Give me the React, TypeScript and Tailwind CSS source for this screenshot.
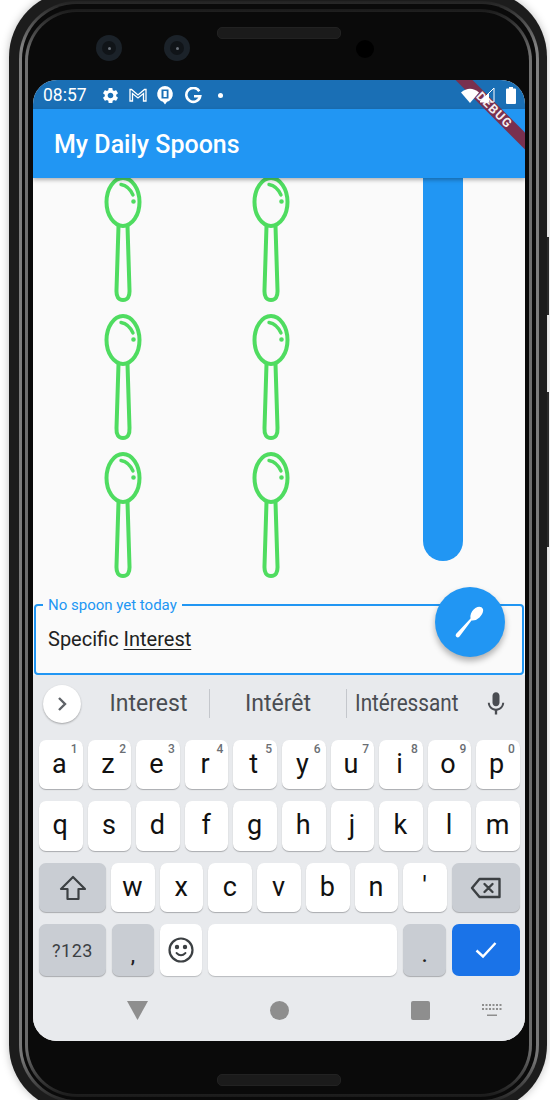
import React from "react";

const GEAR = "M19.14 12.94c.04-.3.06-.61.06-.94 0-.32-.02-.64-.07-.94l2.03-1.58c.18-.14.23-.41.12-.61l-1.92-3.32c-.12-.22-.37-.29-.59-.22l-2.39.96c-.5-.38-1.03-.7-1.62-.94l-.36-2.54c-.04-.24-.24-.41-.48-.41h-3.84c-.24 0-.43.17-.47.41l-.36 2.54c-.59.24-1.13.57-1.62.94l-2.39-.96c-.22-.08-.47 0-.59.22L2.74 8.87c-.12.21-.08.47.12.61l2.03 1.58c-.05.3-.09.63-.09.94s.02.64.07.94l-2.03 1.58c-.18.14-.23.41-.12.61l1.92 3.32c.12.22.37.29.59.22l2.39-.96c.5.38 1.03.7 1.62.94l.36 2.54c.05.24.24.41.48.41h3.84c.24 0 .44-.17.47-.41l.36-2.54c.59-.24 1.13-.56 1.62-.94l2.39.96c.22.08.47 0 .59-.22l1.92-3.32c.12-.22.07-.47-.12-.61l-2.01-1.58zM12 15.6c-1.98 0-3.6-1.62-3.6-3.6s1.62-3.6 3.6-3.6 3.6 1.62 3.6 3.6-1.62 3.6-3.6 3.6z";
const MIC = "M12 14c1.66 0 2.99-1.34 2.99-3L15 5c0-1.66-1.34-3-3-3S9 3.34 9 5v6c0 1.66 1.34 3 3 3zm5.3-3c0 3-2.54 5.1-5.3 5.1S6.7 14 6.7 11H5c0 3.41 2.72 6.23 6 6.72V21h2v-3.28c3.28-.48 6-3.3 6-6.72h-1.7z";

function Spoon() {
  return (
    <svg width="38" height="127" viewBox="0 0 38 127" fill="none" stroke="#4fdc60" strokeWidth="4" strokeLinecap="round" strokeLinejoin="round" className="shrink-0">
      <ellipse cx="19" cy="26" rx="16.500" ry="24" />
      <path d="M14.500 50 L12.500 114 Q12 124 19 124 Q26 124 25.500 114 L23.500 50" />
      <path d="M17 8.500 Q25 10 29 19" strokeWidth="3.400" />
      <circle cx="29.500" cy="25.500" r="1.300" strokeWidth="2" fill="#4fdc60" />
    </svg>
  );
}

function SpoonColumn() {
  return (
    <div className="flex flex-col gap-[11px] -mt-[2px]">
      <Spoon />
      <Spoon />
      <Spoon />
    </div>
  );
}

function StatusLeft() {
  return (
    <div className="relative z-10 flex items-center text-white">
      <span className="ml-[10px] w-[58px] pt-[1px] text-[17.500px] leading-none">08:57</span>
      <svg width="19" height="19" viewBox="0 0 24 24" fill="white"><path d={GEAR} /></svg>
      <svg width="18" height="14" viewBox="0 0 18 14" fill="none" stroke="white" strokeWidth="1.300" className="ml-[9px]">
        <path d="M1 13V1.500h1.500L9 7l6.500-5.500H17V13h-2.500V5.500L9 10 3.500 5.500V13z" />
      </svg>
      <svg width="18" height="20" viewBox="0 0 18 20" className="ml-[9px]">
        <path d="M9 1a8 8 0 0 1 2 15.700L9 19.500l-2-2.800A8 8 0 0 1 9 1z" fill="white" />
        <rect x="5.500" y="4.500" width="7" height="9" fill="#1a6fb5" />
        <rect x="7.500" y="6" width="3.200" height="6" fill="white" />
      </svg>
      <svg width="17" height="17" viewBox="0 0 17 17" fill="none" stroke="white" strokeWidth="2.600" className="ml-[11px]">
        <path d="M14.300 4.200A7 7 0 1 0 15.200 9.200H9" />
      </svg>
      <span className="ml-[16px] h-[5px] w-[5px] rounded-full bg-white" />
    </div>
  );
}

function StatusRight() {
  return (
    <div className="relative z-10 ml-auto flex items-center">
      <svg width="18" height="15" viewBox="0 0 18 15" fill="white"><path d="M0 4.500Q9-3 18 4.500L9 15z" /></svg>
      <svg width="16" height="16" viewBox="0 0 16 16" fill="none">
        <path d="M15 1v14H1z" stroke="white" strokeWidth="1" />
        <path d="M10 6v9H1z" fill="white" />
      </svg>
      <svg width="10" height="17" viewBox="0 0 10 17" className="ml-[11px]" fill="white">
        <path d="M3 0h4v1.500h2a1 1 0 0 1 1 1V16a1 1 0 0 1-1 1H1a1 1 0 0 1-1-1V2.500a1 1 0 0 1 1-1h2z" />
      </svg>
    </div>
  );
}

function Key({ label, hint, shift }: { label: string; hint?: string; shift?: boolean }) {
  return (
    <div className={`relative flex h-full flex-1 items-center justify-center rounded-[7px] bg-white pb-[1px] text-[27px] leading-none text-[#111] shadow-[0_1px_1px_#a9abae] ${shift ? "pr-[3px]" : "pr-[1px]"}`}>
      {label}
      {hint && <span className="absolute right-[5px] top-[2px] text-[12px] font-medium leading-[14px] text-[#6a6e73]">{hint}</span>}
    </div>
  );
}

function Row({ keys, hints }: { keys: string; hints?: string }) {
  return (
    <>
      {keys.split("").map((k, i) => (
        <Key key={k} label={k} hint={hints ? hints[i] : undefined} shift={!!hints} />
      ))}
    </>
  );
}

function Camera() {
  return (
    <div className="flex h-[26px] w-[26px] items-center justify-center rounded-full bg-[#1b2229]">
      <div className="flex h-[14px] w-[14px] items-center justify-center rounded-full bg-[#101418]">
        <div className="h-[3px] w-[3px] rounded-full bg-[#6a7078]" />
      </div>
    </div>
  );
}

export default function App() {
  return (
    <div className="relative h-[1100px] w-[550px] overflow-hidden bg-white pl-[9px] font-['Roboto',sans-serif]">
      <div className="-mt-[9px] h-[1120px] w-[538px] rounded-[66px] bg-[#1c1c1c] pb-[8px] pl-[10px] pr-[8px] pt-[10px] shadow-[0_0_8px_rgba(0,0,0,0.25)]">
        <div className="h-full rounded-[58px] bg-[linear-gradient(to_bottom,#222_0px,#808080_45px,#777_calc(100%-45px),#222_100%)] p-[3px]">
          <div className="h-full rounded-[55px] bg-[#0a0a0a] pb-[3px] pl-[3px] pr-[4px] pt-[5px]">
            <div className="h-full rounded-[52px] bg-[linear-gradient(to_bottom,#1a1a1a_0px,#707070_45px,#6a6a6a_calc(100%-45px),#1a1a1a_100%)] p-[3px]">
              <div className="flex h-full flex-col rounded-[49px] bg-[#0a0a0a] pl-[5px] pr-[4px]">
                <div className="flex h-[68px] shrink-0 items-start pl-[63px]">
                  <div className="mt-[23px]"><Camera /></div>
                  <div className="ml-[42px] mt-[23px]"><Camera /></div>
                  <div className="ml-[27px] mt-[15px] h-[12px] w-[124px] rounded-[5px] border border-[#222] bg-[#1b1b1b]" />
                  <div className="ml-[15px] mt-[28px] h-[18px] w-[18px] rounded-full bg-black" />
                </div>

                <div className="relative flex h-[961px] shrink-0 flex-col overflow-hidden rounded-[24px] bg-[#fafafa]">
                  {/* status bar */}
                  <div className="flex h-[29px] shrink-0 items-center bg-[#1a6fb5] pr-[9px] pt-[1px]">
                    <StatusLeft />
                    <StatusRight />
                  </div>
                  {/* app bar */}
                  <div className="relative z-[1] flex h-[69px] shrink-0 items-center bg-[#2196f3] pl-[21px] pt-[1px] shadow-[0_2px_4px_rgba(0,0,0,0.3)]">
                    <span className="text-[25px] font-medium leading-none text-white">My Daily Spoons</span>
                  </div>
                  {/* debug banner */}
                  <div className="absolute left-[394px] top-[27px] z-[5] flex h-[12px] w-[140px] rotate-45 items-center justify-center bg-[#79304f] pr-[8px] text-[12.500px] font-bold leading-none tracking-[1px] text-[#f4eef0]">
                    DEBUG
                  </div>

                  {/* body */}
                  <div className="flex h-[426px] shrink-0 overflow-hidden pl-[71px]">
                    <SpoonColumn />
                    <div className="ml-[110px]"><SpoonColumn /></div>
                    <div className="ml-[133px] h-[383px] w-[40px] rounded-b-[20px] bg-[#2196f3]" />
                  </div>

                  {/* field */}
                  <div className="relative mx-[1px] flex h-[71px] shrink-0 items-center rounded-[4px] border-2 border-[#2196f3] pb-[2px] pl-[12px] text-[20px] leading-none text-[#212121]">
                    <span>Specific&nbsp;<span className="underline decoration-[1px] underline-offset-[3px]">Interest</span></span>
                    <span className="absolute -top-[9px] left-[7px] bg-[#fafafa] px-[5px] text-[15px] leading-[16px] text-[#2196f3]">No spoon yet today</span>
                    <div className="absolute -top-[19px] right-[17px] flex h-[70px] w-[70px] items-center justify-center rounded-full bg-[#2196f3] shadow-[0_4px_6px_rgba(0,0,0,0.3)]">
                      <svg width="34" height="34" viewBox="0 0 34 34" fill="white">
                        <path d="M3 29 Q2 31 3.500 32 Q5 33 6.500 31.500 L18.500 15.500 Q23 16 26.500 12.500 Q31 7.500 30 4 Q28.500 1 24.500 2 Q20 3.500 18 8.500 Q17 11 17.500 13.500 z" />
                      </svg>
                    </div>
                  </div>

                  {/* keyboard */}
                  <div className="flex flex-1 flex-col bg-[#e8eaed]">
                    <div className="relative flex h-[65px] shrink-0 items-center pb-[8px] text-[23px] leading-none text-[#4a4d52]">
                      <div className="ml-[10px] flex h-[38px] w-[38px] shrink-0 items-center justify-center rounded-full bg-white shadow-[0_1px_2px_rgba(0,0,0,0.3)]">
                        <svg width="14" height="16" viewBox="0 0 14 16" fill="none" stroke="#5f6368" strokeWidth="2.400"><path d="M4 2l6 6-6 6" /></svg>
                      </div>
                      <span className="w-[128px] pl-[7px] text-center">Interest</span>
                      <span className="h-[29px] w-px bg-[#c4c7cc]" />
                      <span className="w-[136px] text-center">Intérêt</span>
                      <span className="h-[29px] w-px bg-[#c4c7cc]" />
                      <span className="ml-[8px] w-[104px] origin-left scale-x-90 whitespace-nowrap">Intéressant</span>
                      <svg width="28" height="28" viewBox="0 0 24 24" fill="#4a4d52" className="ml-[23px]"><path d={MIC} /></svg>
                    </div>

                    <div className="flex flex-col gap-[12px] pl-[6px] pr-[5px]">
                      <div className="flex h-[49px] gap-[5px]"><Row keys="azertyuiop" hints="1234567890" /></div>
                      <div className="flex h-[50px] gap-[5px]"><Row keys="qsdfghjklm" /></div>
                      <div className="flex h-[49px] gap-[5px]">
                        <div className="flex h-full w-[67px] shrink-0 items-center justify-center rounded-[7px] bg-[#c9cdd3] shadow-[0_1px_1px_#a9abae]">
                          <svg width="30" height="30" viewBox="0 0 30 30" fill="none" stroke="#3c4043" strokeWidth="2.200" strokeLinejoin="round"><path d="M15 4 L27 16 H20.500 V26 H9.500 V16 H3 Z" /></svg>
                        </div>
                        <Row keys="wxcvbn'" />
                        <div className="flex h-full w-[68px] shrink-0 items-center justify-center rounded-[7px] bg-[#c9cdd3] shadow-[0_1px_1px_#a9abae]">
                          <svg width="32" height="24" viewBox="0 0 32 24" fill="none" stroke="#3c4043" strokeWidth="2.400" strokeLinejoin="round" strokeLinecap="round"><path d="M9.500 3H29.500V21H9.500L2 12z M14.500 8l8 8 M22.500 8l-8 8" /></svg>
                        </div>
                      </div>
                      <div className="flex h-[52px] gap-[6px]">
                        <div className="flex h-full w-[67px] shrink-0 items-center justify-center rounded-[7px] bg-[#c9cdd3] text-[18px] tracking-[0.5px] text-[#3c4043] shadow-[0_1px_1px_#a9abae]">?123</div>
                        <div className="flex h-full w-[42px] shrink-0 items-end justify-center rounded-[7px] bg-[#c9cdd3] pb-[11px] text-[18px] font-bold leading-none text-[#222] shadow-[0_1px_1px_#a9abae]">,</div>
                        <div className="flex h-full w-[42px] shrink-0 items-center justify-center rounded-[7px] bg-white shadow-[0_1px_1px_#b9bbbe]">
                          <svg width="26" height="26" viewBox="0 0 26 26" fill="none" stroke="#3c4043" strokeWidth="2.200" strokeLinecap="round">
                            <circle cx="13" cy="13" r="11.500" />
                            <circle cx="9" cy="10" r="1.100" fill="#3c4043" />
                            <circle cx="17" cy="10" r="1.100" fill="#3c4043" />
                            <path d="M8.500 16Q13 20.500 17.500 16" strokeWidth="1.800" />
                          </svg>
                        </div>
                        <div className="h-full flex-1 rounded-[7px] bg-white shadow-[0_1px_1px_#b9bbbe]" />
                        <div className="flex h-full w-[43px] shrink-0 items-end justify-center rounded-[7px] bg-[#c9cdd3] pb-[11px] text-[18px] font-bold leading-none text-[#222] shadow-[0_1px_1px_#a9abae]">.</div>
                        <div className="flex h-full w-[68px] shrink-0 items-center justify-center rounded-[7px] bg-[#1a73e8]">
                          <svg width="24" height="20" viewBox="0 0 24 20" fill="none" stroke="white" strokeWidth="2.400"><path d="M2.500 10.500L9 16.500 21.500 3" /></svg>
                        </div>
                      </div>
                    </div>

                    <div className="mt-[25px] flex items-center">
                      <svg width="21" height="19" viewBox="0 0 21 19" className="ml-[94px]" fill="#8e8e8e"><path d="M0 0H21L10.500 19z" /></svg>
                      <span className="ml-[122px] h-[19px] w-[19px] rounded-full bg-[#8e8e8e]" />
                      <span className="ml-[122px] h-[19px] w-[19px] rounded-[2px] bg-[#8e8e8e]" />
                      <svg width="20" height="13" viewBox="0 0 20 13" className="ml-[52px]" fill="#8e8e8e">
                        <path d="M0 0h2v2H0zM3.500 0h2v2h-2zM7 0h2v2H7zM10.500 0h2v2h-2zM14 0h2v2h-2zM17.500 0h2v2h-2zM0 4h2v2H0zM3.500 4h2v2h-2zM7 4h2v2H7zM10.500 4h2v2h-2zM14 4h2v2h-2zM17.500 4h2v2h-2zM5 10.500h10V12H5z" />
                      </svg>
                    </div>
                  </div>
                </div>

                <div className="ml-[184px] mt-[33px] h-[12px] w-[124px] rounded-[5px] border border-[#222] bg-[#1b1b1b]" />
              </div>
            </div>
          </div>
        </div>
      </div>
      {/* side buttons */}
      <div className="absolute left-[547px] top-[237px] h-[78px] w-[2px] bg-[#2a2a2a]" />
      <div className="absolute left-[547px] top-[392px] h-[155px] w-[2px] bg-[#2a2a2a]" />
    </div>
  );
}
